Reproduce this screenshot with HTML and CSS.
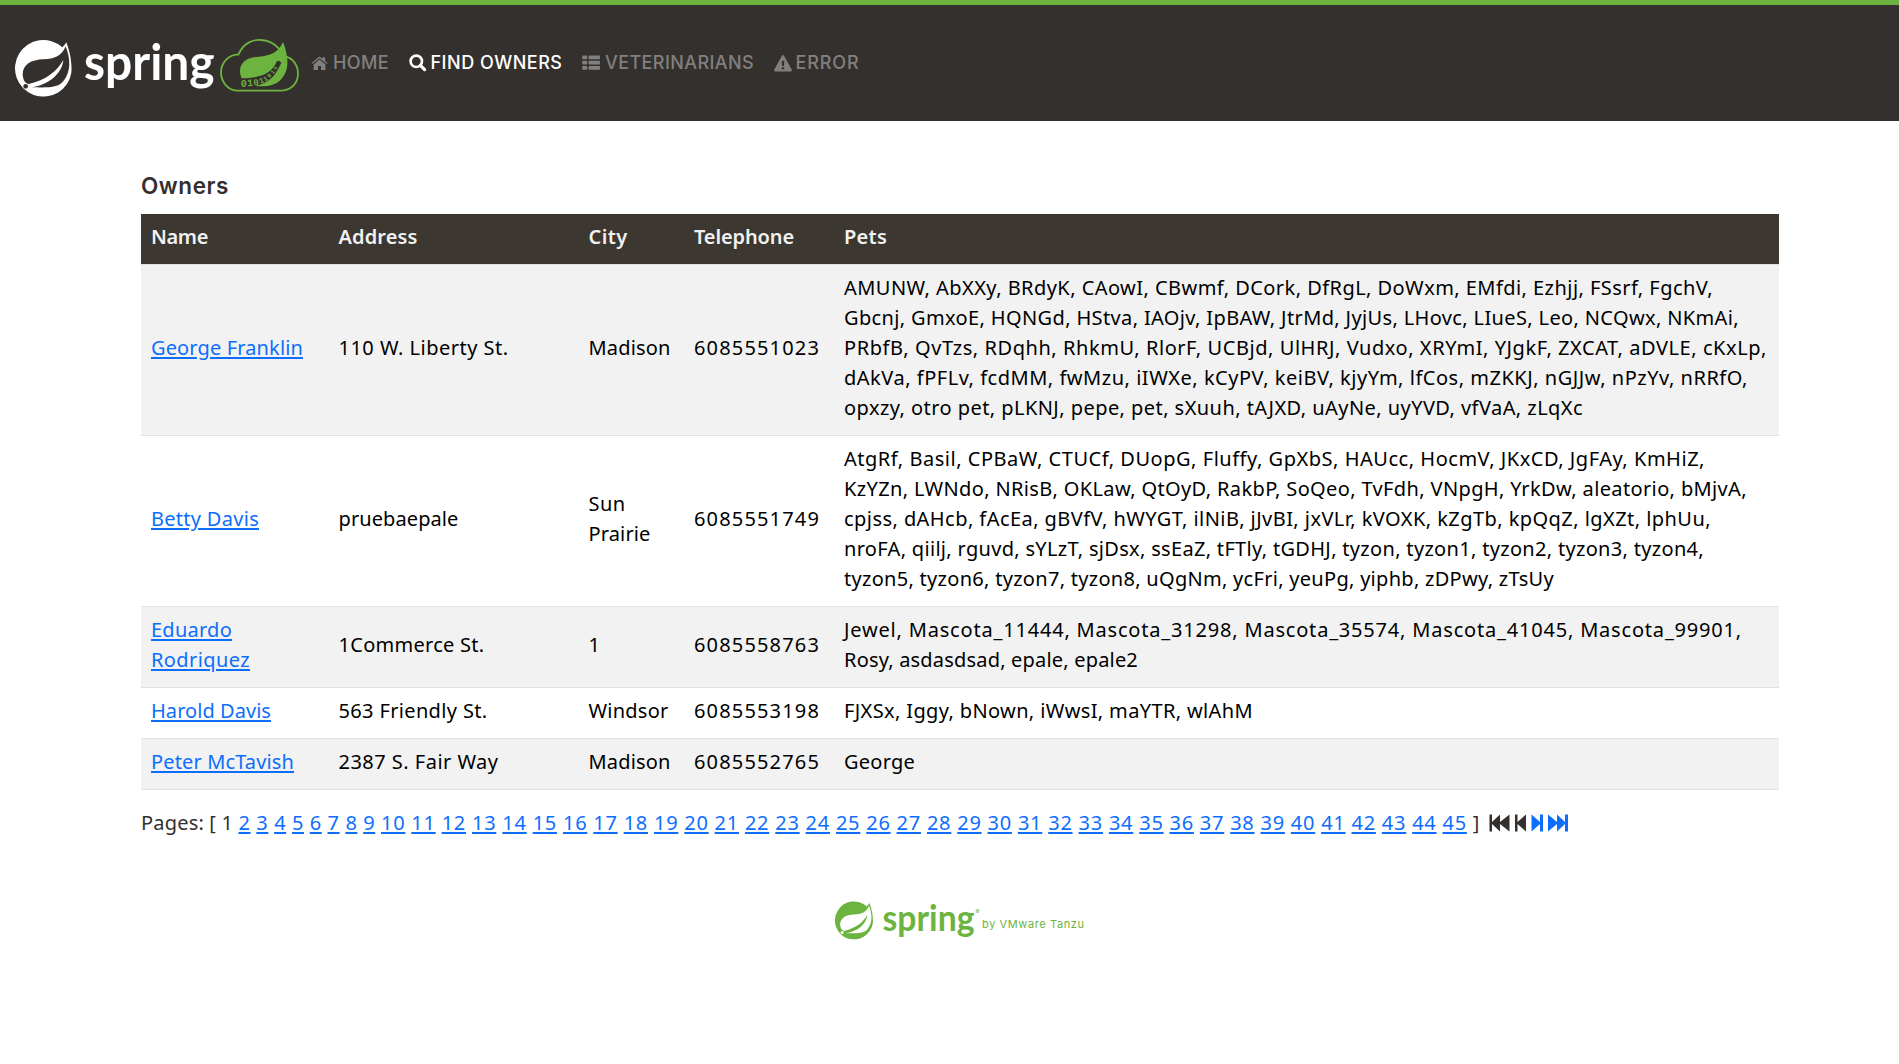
FILE: index.html
```html
<!DOCTYPE html>
<html lang="en">
<head>
<meta charset="utf-8">
<title>PetClinic :: Owners</title>
<link rel="stylesheet" href="styles.css">
</head>
<body>
<svg class="defs" width="0" height="0" aria-hidden="true">
  <symbol id="leaf" viewBox="0 0 174 174">
    <path fill="currentColor" d="M144 26A85 85 0 1 0 171 102C174 72 166 38 156 11Q151 20 144 26Z"/>
    <path class="cut" d="M154 23C143 52 120 61 88 62C50 63 25 78 25 108Q26 124 35 133L43 136C95 124 128 98 147 64C143 104 105 138 52 146C106 147 133 148 149 125C170 97 169 62 154 23Z"/>
    <circle class="cut" cx="34" cy="143" r="7"/>
  </symbol>
</svg>
<header class="navbar">
  <a class="brand" aria-label="Spring">
    <svg width="310" height="117" viewBox="0 12 930 351">
      <use href="#leaf" x="43" y="113" width="174" height="174" color="#fff"/>
      <text class="word" x="252" y="237" font-size="150" textLength="392" lengthAdjust="spacingAndGlyphs" fill="#fff">spring</text>
      <path fill="none" stroke="#6db33f" stroke-width="5.5" d="M712 269C680 267 663 240 663 214C664 180 690 160 715 161C730 125 760 115 783 117C815 118 840 140 850 165C880 170 894 193 894 218C894 245 875 268 845 269Z"/>
      <path fill="#6db33f" d="M849 123C865 163 870 205 845 233C825 256 795 258 764 255C800 250 838 222 840 178C820 216 780 232 725 232C713 205 722 175 762 169C800 165 832 162 849 123Z"/>
      <path fill="none" stroke="#34302d" stroke-width="14" d="M738 243C790 240 822 220 838 182"/>
      <g class="bits" font-size="30" fill="#6db33f">
        <text x="722" y="258">0</text><text x="742" y="256" transform="rotate(-4 742 256)">1</text>
        <text x="762" y="254" font-size="27" transform="rotate(-12 762 254)">0</text><text x="781" y="248" font-size="23" transform="rotate(-22 781 248)">1</text>
        <text x="795" y="242" font-size="20" transform="rotate(-34 795 242)">1</text><text x="808" y="232" font-size="18" transform="rotate(-44 808 232)">0</text><text x="819" y="220" font-size="16" transform="rotate(-52 819 220)">1</text><text x="829" y="207" font-size="14" transform="rotate(-60 829 207)">0</text>
      </g>
    </svg>
  </a>
  <nav class="menu">
    <a class="home"><svg width="17" height="15" viewBox="0 0 17 15"><path d="M8.5 3.6L2.6 8.5V13.4Q2.6 14 3.2 14H7V10H10V14H13.8Q14.4 14 14.4 13.4V8.5Z"/><path d="M8.5 .8Q9 .8 9.4 1.1L11.6 3V1.2H14.1V5L16.6 7.2L15.8 8.1L8.5 2.2L1.2 8.1L.4 7.2L7.6 1.1Q8 .8 8.5 .8Z"/></svg><span data-w="56">HOME</span></a>
    <a class="find active"><svg width="18" height="18" viewBox="0 0 18 18"><circle cx="7.3" cy="7.3" r="5.7" fill="none" stroke="currentColor" stroke-width="2.6"/><path d="M11.3 11.3L15.6 15.6" stroke="currentColor" stroke-width="3.2" stroke-linecap="round"/></svg><span data-w="132">FIND OWNERS</span></a>
    <a class="vets"><svg width="18" height="16" viewBox="0 0 18 16"><path d="M1 .5H4.5Q5.2.5 5.2 1.2V3.5Q5.2 4.2 4.5 4.2H1Q.2 4.2.2 3.5V1.2Q.2.5 1 .5ZM1 5.8H4.5Q5.2 5.8 5.2 6.5V8.8Q5.2 9.5 4.5 9.5H1Q.2 9.5.2 8.8V6.5Q.2 5.8 1 5.8ZM1 11H4.5Q5.2 11 5.2 11.7V14Q5.2 14.7 4.5 14.7H1Q.2 14.7.2 14V11.7Q.2 11 1 11ZM7.2.5H17.2Q18 .5 18 1.2V3.5Q18 4.2 17.2 4.2H7.2Q6.5 4.2 6.5 3.5V1.2Q6.5.5 7.2.5ZM7.2 5.8H17.2Q18 5.8 18 6.5V8.8Q18 9.5 17.2 9.5H7.2Q6.5 9.5 6.5 8.8V6.5Q6.5 5.8 7.2 5.8ZM7.2 11H17.2Q18 11 18 11.7V14Q18 14.7 17.2 14.7H7.2Q6.5 14.7 6.5 14V11.7Q6.5 11 7.2 11Z"/></svg><span data-w="149">VETERINARIANS</span></a>
    <a class="error"><svg width="18" height="17" viewBox="0 0 18 17"><path fill-rule="evenodd" d="M7.9.8Q9-.6 10.1.8L17.8 14.8Q18.3 16.5 16.7 16.6H1.3Q-.3 16.5.2 14.8ZM7.7 5.8L8 11H10L10.3 5.8ZM7.8 12.2V14.3H10.2V12.2Z"/></svg><span data-w="64">ERROR</span></a>
  </nav>
</header>
<main class="container">
  <h2><span data-w="88">Owners</span></h2>
  <table class="owners">
    <colgroup><col class="c-name"><col class="c-address"><col class="c-city"><col class="c-phone"><col></colgroup>
    <thead><tr><th><span data-w="57">Name</span></th><th><span data-w="79">Address</span></th><th><span data-w="39">City</span></th><th><span data-w="100">Telephone</span></th><th><span data-w="43">Pets</span></th></tr></thead>
    <tbody>
      <tr><td><a data-w="152">George Franklin</a></td><td><span data-w="170">110 W. Liberty St.</span></td><td><span data-w="82">Madison</span></td><td><span data-w="126">6085551023</span></td><td><span data-w="869">AMUNW, AbXXy, BRdyK, CAowI, CBwmf, DCork, DfRgL, DoWxm, EMfdi, Ezhjj, FSsrf, FgchV,</span><br><span data-w="895">Gbcnj, GmxoE, HQNGd, HStva, IAOjv, IpBAW, JtrMd, JyjUs, LHovc, LIueS, Leo, NCQwx, NKmAi,</span><br><span data-w="923">PRbfB, QvTzs, RDqhh, RhkmU, RlorF, UCBjd, UlHRJ, Vudxo, XRYmI, YJgkF, ZXCAT, aDVLE, cKxLp,</span><br><span data-w="904">dAkVa, fPFLv, fcdMM, fwMzu, iIWXe, kCyPV, keiBV, kjyYm, lfCos, mZKKJ, nGJJw, nPzYv, nRRfO,</span><br><span data-w="739">opxzy, otro pet, pLKNJ, pepe, pet, sXuuh, tAJXD, uAyNe, uyYVD, vfVaA, zLqXc</span></td></tr>
      <tr><td><a data-w="108">Betty Davis</a></td><td><span data-w="120">pruebaepale</span></td><td><span data-w="37">Sun</span><br><span data-w="62">Prairie</span></td><td><span data-w="126">6085551749</span></td><td><span data-w="861">AtgRf, Basil, CPBaW, CTUCf, DUopG, Fluffy, GpXbS, HAUcc, HocmV, JKxCD, JgFAy, KmHiZ,</span><br><span data-w="903">KzYZn, LWNdo, NRisB, OKLaw, QtOyD, RakbP, SoQeo, TvFdh, VNpgH, YrkDw, aleatorio, bMjvA,</span><br><span data-w="867">cpjss, dAHcb, fAcEa, gBVfV, hWYGT, ilNiB, jJvBI, jxVLr, kVOXK, kZgTb, kpQqZ, lgXZt, lphUu,</span><br><span data-w="860">nroFA, qiilj, rguvd, sYLzT, sjDsx, ssEaZ, tFTly, tGDHJ, tyzon, tyzon1, tyzon2, tyzon3, tyzon4,</span><br><span data-w="710">tyzon5, tyzon6, tyzon7, tyzon8, uQgNm, ycFri, yeuPg, yiphb, zDPwy, zTsUy</span></td></tr>
      <tr><td><a data-w="81">Eduardo</a><br><a data-w="99">Rodriquez</a></td><td><span data-w="146">1Commerce St.</span></td><td>1</td><td><span data-w="126">6085558763</span></td><td><span data-w="898">Jewel, Mascota_11444, Mascota_31298, Mascota_35574, Mascota_41045, Mascota_99901,</span><br><span data-w="294">Rosy, asdasdsad, epale, epale2</span></td></tr>
      <tr><td><a data-w="120">Harold Davis</a></td><td><span data-w="149">563 Friendly St.</span></td><td><span data-w="80">Windsor</span></td><td><span data-w="126">6085553198</span></td><td><span data-w="409">FJXSx, Iggy, bNown, iWwsI, maYTR, wlAhM</span></td></tr>
      <tr><td><a data-w="143">Peter McTavish</a></td><td><span data-w="160">2387 S. Fair Way</span></td><td><span data-w="82">Madison</span></td><td><span data-w="126">6085552765</span></td><td><span data-w="71">George</span></td></tr>
    </tbody>
  </table>
  <div class="pages">
    <span data-w="97.5">Pages: [ 1 </span><span data-w="142.5"><a>2</a> <a>3</a> <a>4</a> <a>5</a> <a>6</a> <a>7</a> <a>8</a> <a>9</a> </span><span data-w="1099"><a>10</a> <a>11</a> <a>12</a> <a>13</a> <a>14</a> <a>15</a> <a>16</a> <a>17</a> <a>18</a> <a>19</a> <a>20</a> <a>21</a> <a>22</a> <a>23</a> <a>24</a> <a>25</a> <a>26</a> <a>27</a> <a>28</a> <a>29</a> <a>30</a> <a>31</a> <a>32</a> <a>33</a> <a>34</a> <a>35</a> <a>36</a> <a>37</a> <a>38</a> <a>39</a> <a>40</a> <a>41</a> <a>42</a> <a>43</a> <a>44</a> <a>45</a> ]</span>
    <svg class="pager" width="80" height="18" viewBox="0 0 80 18">
      <path fill="#34302d" d="M.5.5H3V8L11 .5V8L20.5.5V17.5L11 10V17.5L3 10V17.5H.5ZM26 .5H28.5V8L37 .5V17.5L28.5 10V17.5H26Z"/>
      <path fill="#0d6efd" d="M42.5.5L51 8V.5H54V17.5H51V10L42.5 17.5ZM59 .5L68 8V.5L76 8V.5H79V17.5H76V10L68 17.5V10L59 17.5Z"/>
    </svg>
  </div>
</main>
<footer class="footer">
  <svg width="256" height="44" viewBox="0 0 256 44">
    <use href="#leaf" x="1.5" y="3.5" width="39" height="39" color="#6db33f"/>
    <g fill="#6db33f">
      <text class="word" x="49.5" y="33.5" font-size="36" textLength="92" lengthAdjust="spacingAndGlyphs">spring</text>
      <text class="by" x="142.5" y="17" font-size="6">®</text>
      <text class="by" x="149" y="31" font-size="11" textLength="102">by VMware Tanzu</text>
    </g>
  </svg>
</footer>
<script src="fit.js"></script>
</body>
</html>
```
FILE: styles.css
```css
* { box-sizing: border-box; }
body { margin: 0; font: 20px/30px "Noto Sans", "Open Sans", sans-serif; background: #fff; color: #34302d; --cut: #fff; }
svg { display: block; flex: none; overflow: visible; }
.defs { position: absolute; }
.cut { fill: var(--cut); }
.navbar { --cut: #34302d; display: flex; align-items: center; height: 121px; border-top: 5px solid #6db33f; background: #34302d; }
.menu { display: flex; gap: 19.5px; margin-left: 1px; font: 500 18px/30px Inter, sans-serif; color: #82807f; white-space: nowrap; }
.menu a { display: flex; align-items: center; gap: 4px; }
.menu svg { fill: currentColor; }
.menu .active { color: #fff; }
.menu .home, .menu .vets { gap: 5px; }
.word { font-family: Lato, sans-serif; font-weight: 700; }
.bits { font-family: "Liberation Mono", monospace; font-weight: 700; }
.by { font-family: Inter, sans-serif; }
.container { width: 1638px; margin: 0 0 0 141px; padding-top: 50px; }
h2 { margin: 0 0 14px; font: 600 22.5px/29px Inter, sans-serif; white-space: nowrap; }
.owners { width: 1638px; border-collapse: separate; border-spacing: 0; table-layout: fixed; color: #000; }
th, td { padding: 8px 10px 12px; border-bottom: 1px solid #dee2e6; text-align: left; vertical-align: middle; white-space: nowrap; }
th { background: #3c3731; color: #f1f1f1; font-weight: 600; }
tbody tr:nth-child(odd) { background: #f2f2f2; }
a { color: inherit; }
td a, .pages a { color: #0d6efd; text-decoration: underline 2px; text-underline-offset: 2px; }
.c-name { width: 187.5px; }
.c-address { width: 250px; }
.c-city { width: 105.5px; }
.c-phone { width: 150px; }
.pages { display: flex; margin-top: 18px; white-space: pre; }
.pager { margin: 6px 0 0 9px; }
.footer { display: flex; justify-content: center; padding: 59px 0 0 23px; }
```
FILE: fit.js
```js
// Tracks each label so that it fills its measure (data-w, in pixels).
document.querySelectorAll("[data-w]").forEach(function (el) {
  var gap = Number(el.dataset.w) - el.getBoundingClientRect().width;
  el.style.letterSpacing = gap / el.textContent.length + "px";
});
```
